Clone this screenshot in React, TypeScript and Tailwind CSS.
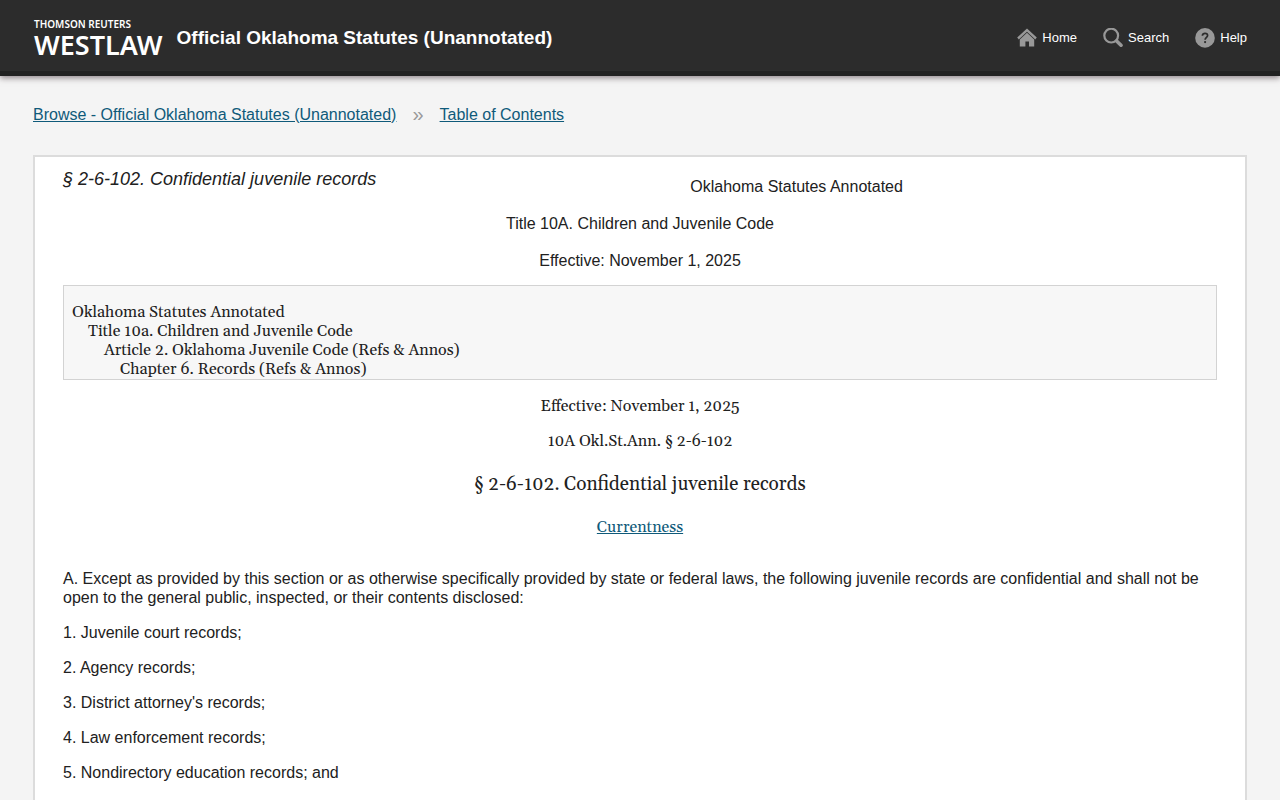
import React from 'react';

const OUTLINE = [
  { text: 'Oklahoma Statutes Annotated', indent: 'pl-0' },
  { text: 'Title 10a. Children and Juvenile Code', indent: 'pl-4' },
  { text: 'Article 2. Oklahoma Juvenile Code (Refs & Annos)', indent: 'pl-8' },
  { text: 'Chapter 6. Records (Refs & Annos)', indent: 'pl-12' },
];

const RECORDS = [
  '1. Juvenile court records;',
  '2. Agency records;',
  "3. District attorney's records;",
  '4. Law enforcement records;',
  '5. Nondirectory education records; and',
];

function HomeIcon() {
  return (
    <svg width="20" height="20" viewBox="0 0 20 20" fill="#989898" aria-hidden="true">
      <path d="M10 0.4 L19.8 9.6 L18.2 11.4 L10 3.8 L1.8 11.4 L0.2 9.6 Z" />
      <path d="M10 4.8 L17.2 11.4 V18.4 H12 V13.6 H8.4 V18.4 H2.8 V11.4 Z" />
    </svg>
  );
}

function SearchIcon() {
  return (
    <svg width="20" height="20" viewBox="0 0 20 20" fill="none" stroke="#989898" aria-hidden="true">
      <circle cx="8.2" cy="7.6" r="6.9" strokeWidth="2.2" />
      <path d="M13.6 13 L18 17.2" strokeWidth="3.6" strokeLinecap="round" />
    </svg>
  );
}

function HelpIcon() {
  return (
    <svg width="20" height="20" viewBox="0 0 20 20" aria-hidden="true">
      <circle cx="10" cy="9.9" r="9.8" fill="#989898" />
      <path
        d="M7.4 7.8 C7.4 6.1 8.5 5.3 10 5.3 C11.5 5.3 12.6 6.1 12.6 7.5 C12.6 9.3 10.1 9.5 10.1 11.8"
        fill="none"
        stroke="#2c2c2c"
        strokeWidth="1.7"
      />
      <circle cx="10.1" cy="14.1" r="1.1" fill="#2c2c2c" />
    </svg>
  );
}

const NAV = [
  { label: 'Home', icon: HomeIcon },
  { label: 'Search', icon: SearchIcon },
  { label: 'Help', icon: HelpIcon },
];

export default function App() {
  return (
    <div className="min-h-screen flex flex-col bg-[#f4f4f4] text-[#212121] text-base leading-[19px] font-['Liberation_Sans',Arial,sans-serif]">
      <header className="flex items-center justify-between px-[33px] h-[76px] bg-[#2c2c2c] border-b-[5px] border-[#212121] text-white shadow-[0_2px_6px_rgba(40,20,30,0.5)]">
        <div className="flex items-center gap-[14px]">
          <a href="#" className="flex flex-col pt-1 pl-px font-['Noto_Sans',sans-serif]">
            <span className="text-[10px] leading-[14px] font-semibold">THOMSON REUTERS</span>
            <span className="text-[27px] leading-7 font-semibold">WESTLAW</span>
          </a>
          <span className="text-[19px] leading-6 font-bold pt-1">Official Oklahoma Statutes (Unannotated)</span>
        </div>
        <nav className="flex items-center gap-[26px] pt-1">
          {NAV.map(({ label, icon: Icon }) => (
            <a key={label} href="#" className="flex items-center gap-[5px] text-[13px] leading-5">
              <Icon />
              {label}
            </a>
          ))}
        </nav>
      </header>

      <nav aria-label="Breadcrumb" className="flex items-center gap-4 px-[33px] pt-[29px] pb-[31px]">
        <a href="#" className="text-[#0f5a7a] underline">Browse - Official Oklahoma Statutes (Unannotated)</a>
        <span className="text-xl leading-[19px] text-[#999]">»</span>
        <a href="#" className="text-[#0f5a7a] underline">Table of Contents</a>
      </nav>

      <main className="flex-1 flex flex-col mx-[33px] px-7 bg-white border-2 border-b-0 border-[#dcdcdc]">
        <div className="flex items-start">
          <h1 className="text-lg leading-5 italic pt-3">§ 2-6-102. Confidential juvenile records</h1>
          <p className="flex-1 text-center pt-5">Oklahoma Statutes Annotated</p>
        </div>
        <p className="text-center mt-[18px]">Title 10A. Children and Juvenile Code</p>
        <p className="text-center mt-[18px]">Effective: November 1, 2025</p>

        <div className="font-[Georgia,Gelasio,'Liberation_Serif',serif]">
          <div className="mt-[15px] px-2 pt-[17px] bg-[#f7f7f7] border border-[#d3d3d3]">
            {OUTLINE.map(({ text, indent }) => (
              <div key={text} className={indent}>{text}</div>
            ))}
          </div>

          <div className="text-center">
            <p className="mt-[17px]">Effective: November 1, 2025</p>
            <p className="mt-4">10A Okl.St.Ann. § 2-6-102</p>
            <h2 className="mt-[21px] text-[19px] leading-6">§ 2-6-102. Confidential juvenile records</h2>
            <p className="mt-[22px]">
              <a href="#" className="text-[#0f5a7a] underline">Currentness</a>
            </p>
          </div>
        </div>

        <p className="mt-8">
          A. Except as provided by this section or as otherwise specifically provided by state or federal laws, the
          following juvenile records are confidential and shall not be open to the general public, inspected, or their
          contents disclosed:
        </p>
        {RECORDS.map((record) => (
          <p key={record} className="mt-4">{record}</p>
        ))}
      </main>
    </div>
  );
}
